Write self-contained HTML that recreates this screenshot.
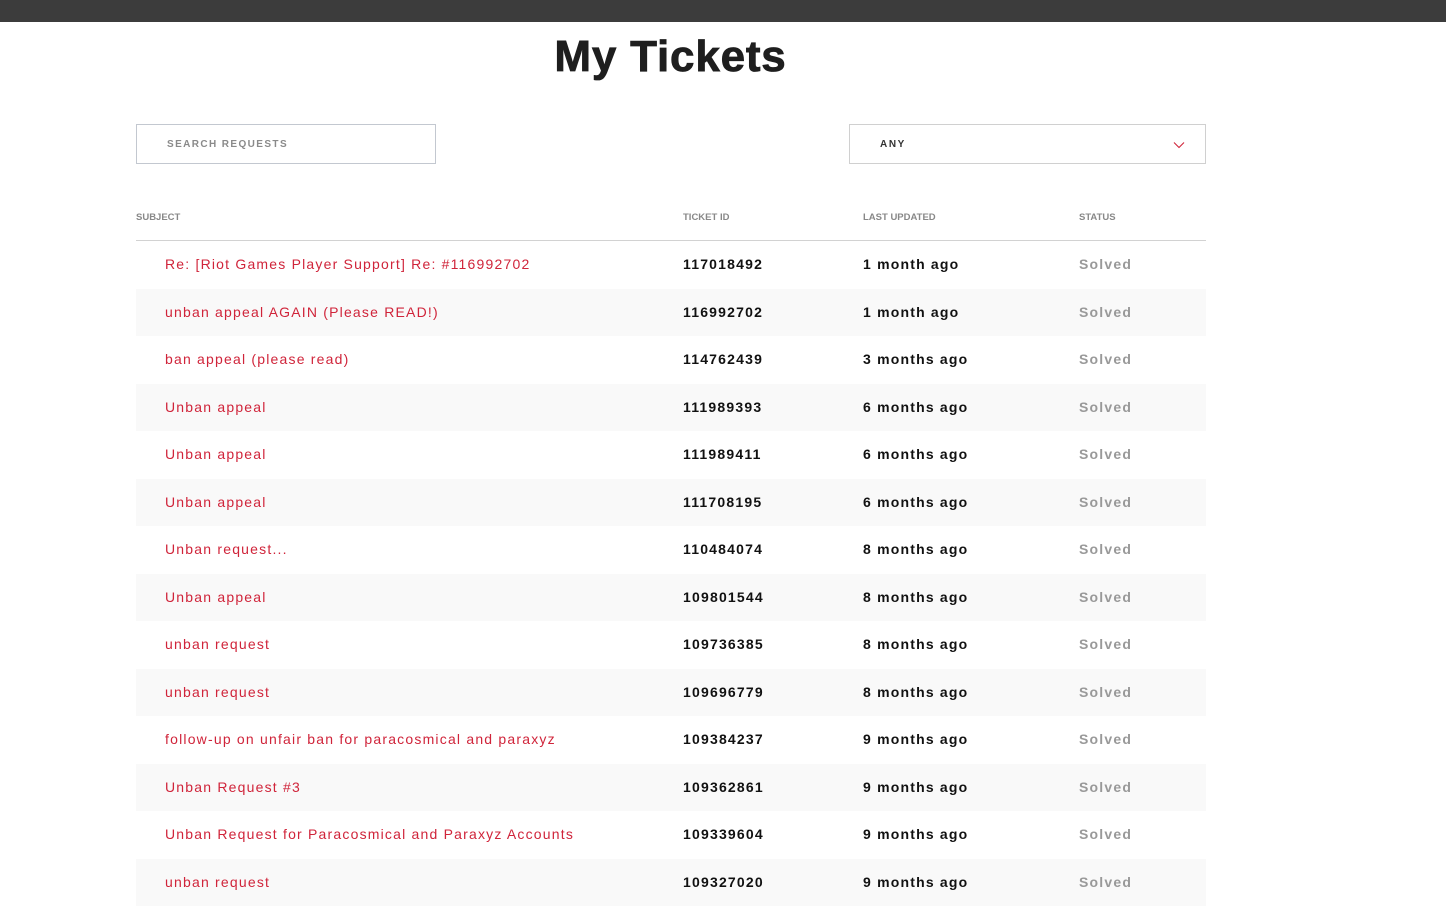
<!DOCTYPE html>
<html><head><meta charset="utf-8"><style>
*{margin:0;padding:0;box-sizing:border-box}
body{width:1446px;height:911px;overflow:hidden;background:#fff;font-family:"Liberation Sans",Arial,sans-serif;position:relative}
.top{position:absolute;left:0;top:0;width:1446px;height:22px;background:#3c3c3c}
h1{position:absolute;left:0;width:1341px;top:32px;text-align:center;font-size:44px;font-weight:bold;color:#1e1e1e;letter-spacing:0.8px;-webkit-text-stroke:0.8px #1e1e1e}
.search{position:absolute;left:136px;top:124px;width:300px;height:40px;border:1px solid #c3c8d0;font-size:10px;letter-spacing:1.4px;color:#8a8a8a;font-weight:bold;padding:14px 0 0 30px}
.sel{position:absolute;left:849px;top:124px;width:357px;height:40px;border:1px solid #d0d0d0;font-size:10px;letter-spacing:1.6px;color:#333;font-weight:bold;padding:14px 0 0 30px}
.sel svg{position:absolute;right:20px;top:16px}
.hd{position:absolute;top:212px;font-size:9.5px;color:#888;font-weight:bold}
.hl{position:absolute;left:136px;top:240px;width:1070px;height:1px;background:#d2d2d2}
.row{position:absolute;left:136px;width:1070px;height:47.5px;font-size:14px;letter-spacing:1.2px}
.row.alt{background:#f9f9f9}
.row span{position:absolute;top:15px}
.s{left:29px;color:#d0243a;font-weight:normal}
.i{left:547px;color:#111;font-weight:bold}
.u{left:727px;color:#111;font-weight:bold}
.st{left:943px;color:#999;font-weight:bold}
</style></head><body>
<div class="top"></div>
<h1>My Tickets</h1>
<div class="search">SEARCH REQUESTS</div>
<div class="sel">ANY<svg width="12" height="8" viewBox="0 0 12 8"><path d="M1 1.5l5 5 5-5" fill="none" stroke="#d0243a" stroke-width="1.1"/></svg></div>
<div class="hd" style="left:136px">SUBJECT</div>
<div class="hd" style="left:683px">TICKET ID</div>
<div class="hd" style="left:863px">LAST UPDATED</div>
<div class="hd" style="left:1079px">STATUS</div>
<div class="hl"></div>
<div class="row" style="top:241px"><span class="s">Re: [Riot Games Player Support] Re: #116992702</span><span class="i">117018492</span><span class="u">1 month ago</span><span class="st">Solved</span></div>
<div class="row alt" style="top:288.5px"><span class="s">unban appeal AGAIN (Please READ!)</span><span class="i">116992702</span><span class="u">1 month ago</span><span class="st">Solved</span></div>
<div class="row" style="top:336px"><span class="s">ban appeal (please read)</span><span class="i">114762439</span><span class="u">3 months ago</span><span class="st">Solved</span></div>
<div class="row alt" style="top:383.5px"><span class="s">Unban appeal</span><span class="i">111989393</span><span class="u">6 months ago</span><span class="st">Solved</span></div>
<div class="row" style="top:431px"><span class="s">Unban appeal</span><span class="i">111989411</span><span class="u">6 months ago</span><span class="st">Solved</span></div>
<div class="row alt" style="top:478.5px"><span class="s">Unban appeal</span><span class="i">111708195</span><span class="u">6 months ago</span><span class="st">Solved</span></div>
<div class="row" style="top:526px"><span class="s">Unban request...</span><span class="i">110484074</span><span class="u">8 months ago</span><span class="st">Solved</span></div>
<div class="row alt" style="top:573.5px"><span class="s">Unban appeal</span><span class="i">109801544</span><span class="u">8 months ago</span><span class="st">Solved</span></div>
<div class="row" style="top:621px"><span class="s">unban request</span><span class="i">109736385</span><span class="u">8 months ago</span><span class="st">Solved</span></div>
<div class="row alt" style="top:668.5px"><span class="s">unban request</span><span class="i">109696779</span><span class="u">8 months ago</span><span class="st">Solved</span></div>
<div class="row" style="top:716px"><span class="s">follow-up on unfair ban for paracosmical and paraxyz</span><span class="i">109384237</span><span class="u">9 months ago</span><span class="st">Solved</span></div>
<div class="row alt" style="top:763.5px"><span class="s">Unban Request #3</span><span class="i">109362861</span><span class="u">9 months ago</span><span class="st">Solved</span></div>
<div class="row" style="top:811px"><span class="s">Unban Request for Paracosmical and Paraxyz Accounts</span><span class="i">109339604</span><span class="u">9 months ago</span><span class="st">Solved</span></div>
<div class="row alt" style="top:858.5px"><span class="s">unban request</span><span class="i">109327020</span><span class="u">9 months ago</span><span class="st">Solved</span></div>
</body></html>
